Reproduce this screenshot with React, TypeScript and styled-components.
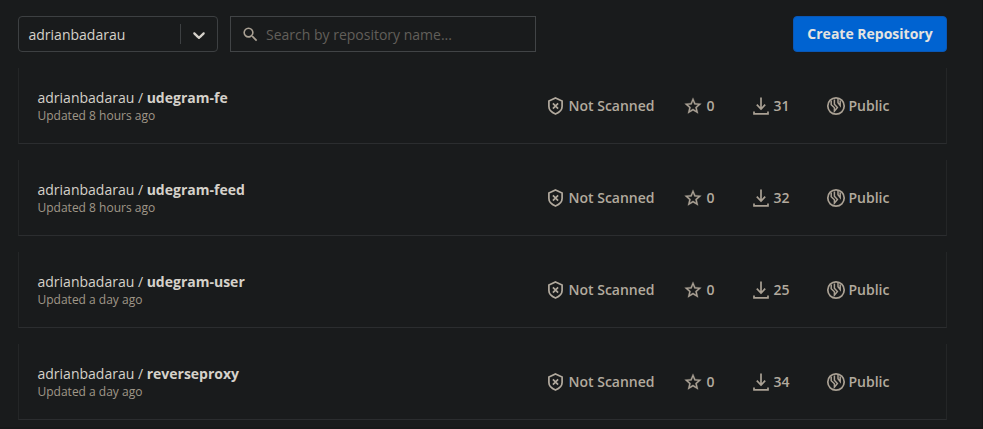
import React from "react";
import styled, { createGlobalStyle } from "styled-components";

const Global = createGlobalStyle`
  * { box-sizing: border-box; }
  body { margin: 0; background: #191b1c; font-family: "Open Sans", sans-serif; font-size: 14px; color: #d5d1ca; overflow: hidden; }
`;
const Page = styled.main`
  width: 983px; height: 429px; overflow: hidden; padding: 16px 35px 0 18px;
  border-right: 1px solid #151617; border-bottom: 2px solid #171819;
`;
const Toolbar = styled.header`
  display: flex; height: 36px; margin-bottom: 16px;
`;
const Select = styled.div`
  display: flex; align-items: center; width: 200px; height: 36px;
  border: 1px solid #3d4042; border-radius: 4px; padding-left: 9.5px; margin-right: 12px;
`;
const SelectValue = styled.span`flex: 1; line-height: 20px; padding-top: 1px;`;
const Divider = styled.span`width: 1px; height: 20px; background: #3d4042;`;
const Arrow = styled.span`display: flex; width: 36px; justify-content: center; padding-top: 1px;`;
const Search = styled.label`
  display: flex; align-items: center; width: 306px; height: 36px;
  border: 1px solid #414446; padding-left: 9.5px;
  svg { margin: 0 6.5px 0 0; }
`;
const SearchInput = styled.input`
  flex: 1; min-width: 0; background: none; border: 0; outline: 0; padding: 1px 0 0;
  font: inherit; line-height: 20px; color: inherit;
  &::placeholder { color: #625f5a; opacity: 1; }
`;
const Create = styled.button`
  width: 154px; height: 36px; margin-left: auto; padding: 0 0 1px; border: 1px solid #0a57b5; border-radius: 4px;
  background: #0063d1; color: #e5e3e0; font: 700 14px "Open Sans", sans-serif;
`;
const List = styled.section`display: grid; gap: 16px;`;
const Card = styled.article`
  display: grid; grid-template-columns: 509px 136px 69px 74px 1fr; align-items: center;
  height: 76px; padding-left: 18.5px;
  border: 1px solid #242627; border-top: 0; border-bottom-color: #2b2d2f;
`;
const Title = styled.div`line-height: 20px;`;
const Updated = styled.div`font-size: 12px; line-height: 16px; color: #a09789;`;
const Stat = styled.div<{ $gap?: number }>`
  display: flex; align-items: center; gap: ${(p) => p.$gap ?? 4}px; font-weight: 600; line-height: 20px; color: #b2aa9e;
  svg { flex: none; }
`;

const Chevron = () => (
  <svg width="20" height="20" viewBox="0 0 20 20" fill="#d5d1ca">
    <path d="M4.516 7.548c0.436-0.446 1.043-0.481 1.576 0l3.908 3.747 3.908-3.747c0.533-0.481 1.141-0.446 1.574 0 0.436 0.445 0.408 1.197 0 1.615-0.406 0.418-4.695 4.502-4.695 4.502-0.217 0.223-0.502 0.335-0.787 0.335s-0.57-0.112-0.789-0.335c0 0-4.287-4.084-4.695-4.502s-0.436-1.17 0-1.615z" />
  </svg>
);
const SearchIcon = () => (
  <svg width="19" height="19" viewBox="0 0 24 24" fill="#aaa194">
    <path d="M15.5 14h-.79l-.28-.27A6.47 6.47 0 0 0 16 9.5 6.5 6.5 0 1 0 9.5 16c1.61 0 3.09-.59 4.23-1.57l.27.28v.79l5 4.99L20.49 19l-4.99-5zm-6 0C7.01 14 5 11.99 5 9.5S7.01 5 9.5 5 14 7.01 14 9.5 11.99 14 9.5 14z" />
  </svg>
);
const Shield = () => (
  <svg width="18" height="18" viewBox="0 0 18 18" fill="none" stroke="#b2aa9e" strokeWidth="1.7">
    <path d="M8.5 1L15.1 4V9.6C15.1 13 12.2 15.6 8.5 17C4.8 15.6 1.9 13 1.9 9.6V4Z" />
    <path d="M5.9 6.4L11.1 11.6M11.1 6.4L5.9 11.6" />
  </svg>
);
const Star = () => (
  <svg width="20" height="20" viewBox="0 0 24 24" fill="#aaa194" stroke="#aaa194" strokeWidth="0.3">
    <path d="M22 9.24l-7.19-.62L12 2 9.19 8.63 2 9.24l5.46 4.73L5.82 21 12 17.27 18.18 21l-1.63-7.03L22 9.24zM12 15.4l-3.76 2.27 1-4.28-3.32-2.88 4.38-.38L12 6.1l1.71 4.04 4.38.38-3.32 2.88 1 4.28L12 15.4z" />
  </svg>
);
const Download = () => (
  <svg width="18" height="20" viewBox="0 0 18 20" fill="none" stroke="#aaa194" strokeWidth="1.7">
    <path d="M9 1.5V13M4.8 8.7L9 13L13.2 8.7M2 15.5V17.8H16V15.5" />
  </svg>
);
const Globe = () => (
  <svg width="20" height="20" viewBox="0 0 20 20" fill="none" stroke="#aaa194" strokeWidth="1.5">
    <circle cx="10" cy="10" r="8.2" strokeWidth="1.7" />
    <path d="M5.2 4.4V8.8L8.4 11.8V15.2L11.4 11.6L8.4 8.2V3.4M12 2.4V6.8L14.2 9.6V4.4" />
  </svg>
);

const repositories = [
  { name: "udegram-fe", updated: "8 hours ago", pulls: 31 },
  { name: "udegram-feed", updated: "8 hours ago", pulls: 32 },
  { name: "udegram-user", updated: "a day ago", pulls: 25 },
  { name: "reverseproxy", updated: "a day ago", pulls: 34 },
];

export default function App() {
  return (
    <>
      <Global />
      <Page>
        <Toolbar>
          <Select>
            <SelectValue>adrianbadarau</SelectValue>
            <Divider />
            <Arrow><Chevron /></Arrow>
          </Select>
          <Search>
            <SearchIcon />
            <SearchInput placeholder="Search by repository name..." />
          </Search>
          <Create>Create Repository</Create>
        </Toolbar>
        <List>
          {repositories.map((repo) => (
            <Card key={repo.name}>
              <div>
                <Title>adrianbadarau / <b>{repo.name}</b></Title>
                <Updated>Updated {repo.updated}</Updated>
              </div>
              <Stat><Shield />Not Scanned</Stat>
              <Stat><Star />0</Stat>
              <Stat><Download />{repo.pulls}</Stat>
              <Stat $gap={3}><Globe />Public</Stat>
            </Card>
          ))}
        </List>
      </Page>
    </>
  );
}
